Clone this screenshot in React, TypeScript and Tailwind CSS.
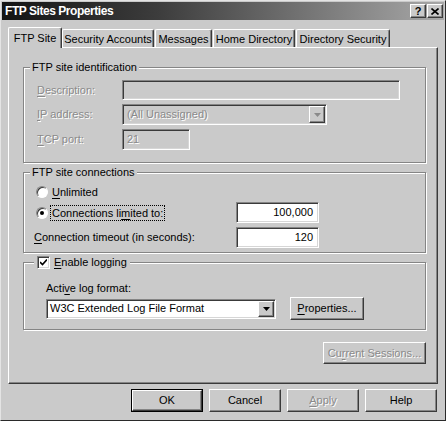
import React from "react";

const raised =
  "border border-t-white border-l-white border-b-[#3a3a3a] border-r-[#3a3a3a] shadow-[inset_-1px_-1px_0_#858585]";
const sunken =
  "border border-t-[#858585] border-l-[#858585] border-b-white border-r-white shadow-[inset_1px_1px_0_#3a3a3a,inset_-1px_-1px_0_#d6d6d6]";
const etched = "border border-[#858585] shadow-[inset_1px_1px_0_#fff,1px_1px_0_#fff]";
const disabledText = "text-[#8a8a8a] [text-shadow:1px_1px_0_#fff]";

function U({ children }: { children: React.ReactNode }) {
  return <span className="underline underline-offset-[2px]">{children}</span>;
}

function Arrow({ disabled }: { disabled?: boolean }) {
  return (
    <div className={`w-[16px] h-full bg-[#cacaca] flex items-center justify-center ${raised}`}>
      <svg width="7" height="4" viewBox="0 0 7 4">
        <path d="M0 0h7L3.5 4z" fill={disabled ? "#8a8a8a" : "#000"} />
      </svg>
    </div>
  );
}

function Tab({ label, w, selected, ml }: { label: string; w: number; selected?: boolean; ml?: number }) {
  return (
    <div
      style={{ width: w, marginLeft: ml ?? 0 }}
      className={
        selected
          ? "relative z-10 h-[21px] -mb-px bg-[#cacaca] border-t border-l border-t-white border-l-white border-r border-r-[#3a3a3a] shadow-[inset_-1px_0_0_#858585] rounded-t-[2px] flex items-start justify-center pt-[4px]"
          : "h-[18px] border-t border-l border-t-white border-l-white border-r border-r-[#3a3a3a] shadow-[inset_-1px_0_0_#858585] rounded-t-[2px] flex items-start justify-center pt-[3px]"
      }
    >
      <span className="leading-[13px]">{label}</span>
    </div>
  );
}

function Btn({
  children,
  w,
  h = 23,
  disabled,
  def,
}: {
  children: React.ReactNode;
  w: number;
  h?: number;
  disabled?: boolean;
  def?: boolean;
}) {
  return (
    <div style={{ width: w, height: h }} className={`flex ${def ? "border border-black" : ""}`}>
      <div
        className={`flex-1 flex items-center justify-center ${raised} ${disabled ? disabledText : "text-black"}`}
      >
        {children}
      </div>
    </div>
  );
}

export default function App() {
  return (
    <div className="w-[446px] h-[421px] bg-[#cacaca] font-['Liberation_Sans',Arial,sans-serif] text-[11px] text-black leading-[13px] border border-t-[#e4e4e4] border-l-[#e4e4e4] border-r-[#2a2a2a] border-b-[#2a2a2a] flex flex-col overflow-hidden">
      {/* Title bar */}
      <div className="mt-[1px] mx-[1px] h-[18px] bg-[linear-gradient(to_right,#141414,#3c3c3c_35%,#a8a8a8)] flex items-center justify-between pl-[3px] pr-[1px]">
        <span className="text-white font-bold text-[12px] tracking-[-0.45px]">FTP Sites Properties</span>
        <div className="flex">
          <div className={`w-[16px] h-[14px] bg-[#cacaca] flex items-center justify-center font-bold text-[11px] ${raised}`}>?</div>
          <div className={`ml-[1px] w-[16px] h-[14px] bg-[#cacaca] flex items-center justify-center ${raised}`}>
            <svg width="8" height="7" viewBox="0 0 8 7">
              <path d="M0.5 0.5L7.5 6.5M7.5 0.5L0.5 6.5" stroke="#000" strokeWidth="1.6" />
            </svg>
          </div>
        </div>
      </div>

      {/* Body */}
      <div className="px-[7px] flex flex-col">
        {/* Tabs */}
        <div className="mt-[7px] h-[20px] flex items-end">
          <Tab label="FTP Site" w={54} selected />
          <Tab label="Security Accounts" w={92} />
          <Tab label="Messages" w={57} ml={1} />
          <Tab label="Home Directory" w={82} ml={1} />
          <Tab label="Directory Security" w={94} ml={1} />
        </div>

        {/* Panel */}
        <div className="h-[337px] border border-t-white border-l-white border-r-[#3a3a3a] border-b-[#3a3a3a] shadow-[inset_-1px_-1px_0_#858585] pl-[14px] pr-[11px] pt-[19px] flex flex-col">
          {/* Group 1 */}
          <div className={`relative h-[96px] ${etched} pt-[12px] flex flex-col`}>
            <span className="absolute -top-[7px] left-[6px] px-[2px] bg-[#cacaca]">FTP site identification</span>
            <div className="flex items-center h-[20px] pl-[13px]">
              <span className={`w-[85px] ${disabledText}`}>
                <U>D</U>escription:
              </span>
              <div className={`w-[278px] h-[20px] ${sunken}`} />
            </div>
            <div className="flex items-center h-[21px] mt-[4px] pl-[13px]">
              <span className={`w-[85px] ${disabledText}`}>
                <U>I</U>P address:
              </span>
              <div className={`w-[205px] h-[21px] ${sunken} flex items-stretch p-[1px]`}>
                <span className={`flex-1 pl-[3px] flex items-center ${disabledText}`}>(All Unassigned)</span>
                <Arrow disabled />
              </div>
            </div>
            <div className="flex items-center h-[21px] mt-[4px] pl-[13px]">
              <span className={`w-[85px] ${disabledText}`}>
                <U>T</U>CP port:
              </span>
              <div className={`w-[68px] h-[21px] ${sunken} pl-[4px] flex items-center ${disabledText}`}>21</div>
            </div>
          </div>

          {/* Group 2 */}
          <div className={`relative mt-[9px] h-[81px] ${etched} flex flex-col`}>
            <span className="absolute -top-[7px] left-[6px] px-[2px] bg-[#cacaca]">FTP site connections</span>
            <div className="mt-[11px] h-[16px] flex items-center pl-[12px]">
              <div className="w-[12px] h-[12px] rounded-full bg-white border border-t-[#858585] border-l-[#858585] border-b-white border-r-white shadow-[inset_1px_1px_0_#3a3a3a]" />
              <span className="ml-[4px]">
                <U>U</U>nlimited
              </span>
            </div>
            <div className="mt-[2px] h-[21px] flex items-center pl-[12px]">
              <div className="w-[200px] flex items-center">
                <div className="w-[12px] h-[12px] rounded-full bg-white flex items-center justify-center border border-t-[#858585] border-l-[#858585] border-b-white border-r-white shadow-[inset_1px_1px_0_#3a3a3a]">
                  <div className="w-[4px] h-[4px] rounded-full bg-black" />
                </div>
                <span className="ml-[3px] px-[1px] outline outline-1 outline-dotted outline-black leading-[14px]">
                  Connections li<U>m</U>ited to:
                </span>
              </div>
              <div className={`w-[83px] h-[21px] bg-white ${sunken} flex items-center justify-end pr-[5px]`}>100,000</div>
            </div>
            <div className="mt-[4px] h-[21px] flex items-center pl-[10px]">
              <span className="w-[202px]">
                <U>C</U>onnection timeout (in seconds):
              </span>
              <div className={`w-[83px] h-[21px] bg-white ${sunken} flex items-center justify-end pr-[5px]`}>120</div>
            </div>
          </div>

          {/* Group 3 */}
          <div className={`relative mt-[9px] h-[68px] ${etched} flex flex-col`}>
            <div className="absolute -top-[7px] left-[10px] px-[3px] bg-[#cacaca] flex items-center">
              <div className={`w-[13px] h-[13px] bg-white ${sunken} flex items-center justify-center`}>
                <svg width="7" height="7" viewBox="0 0 7 7">
                  <path d="M0 3l2.5 2.5L7 0.5" stroke="#000" strokeWidth="1.6" fill="none" />
                </svg>
              </div>
              <span className="ml-[4px]">
                <U>E</U>nable logging
              </span>
            </div>
            <span className="mt-[18px] pl-[22px] leading-[14px]">
              Acti<U>v</U>e log format:
            </span>
            <div className="mt-[2px] flex items-center pl-[22px]">
              <div className={`w-[230px] h-[20px] bg-white ${sunken} flex items-stretch p-[1px]`}>
                <span className="flex-1 pl-[2px] flex items-center">W3C Extended Log File Format</span>
                <Arrow />
              </div>
              <div className="ml-[14px]">
                <Btn w={74}>
                  <U>P</U>roperties...
                </Btn>
              </div>
            </div>
          </div>

          <div className="mt-[12px] self-end">
            <Btn w={103} h={22} disabled>
              Cu<U>r</U>rent Sessions...
            </Btn>
          </div>
        </div>

        {/* Footer buttons */}
        <div className="mt-[5px] flex justify-end gap-[6px] pr-[1px]">
          <Btn w={72} def>
            OK
          </Btn>
          <Btn w={72}>Cancel</Btn>
          <Btn w={72} disabled>
            <U>A</U>pply
          </Btn>
          <Btn w={72}>Help</Btn>
        </div>
      </div>
    </div>
  );
}
